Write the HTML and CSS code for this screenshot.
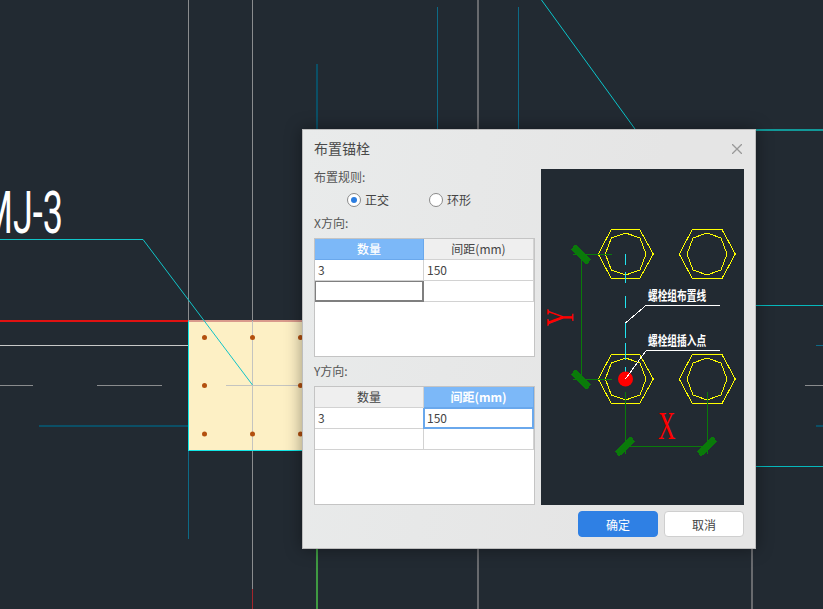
FILE: index.html
```html
<!DOCTYPE html>
<html lang="zh-CN">
<head>
<meta charset="utf-8">
<title>布置锚栓</title>
<link rel="stylesheet" href="styles.css">
</head>
<body>
<svg class="canvas" width="823" height="609" viewBox="0 0 823 609">
  <rect class="plate" x="188" y="321" width="116" height="129"/>
  <line class="l-red" x1="0" y1="321" x2="188" y2="321"/>
  <line class="l-plate-top" x1="188" y1="321" x2="304" y2="321"/>
  <line class="l-white" x1="0" y1="345" x2="188" y2="345"/>
  <line class="l-gray" x1="0" y1="385.5" x2="33" y2="385.5"/>
  <line class="l-gray" x1="97" y1="385.5" x2="162" y2="385.5"/>
  <line class="l-teal2" x1="39" y1="426" x2="188" y2="426"/>
  <line class="l-gray" x1="188.5" y1="0" x2="188.5" y2="321"/>
  <line class="l-teal1" x1="188.5" y1="450" x2="188.5" y2="539"/>
  <line class="l-gray" x1="252.5" y1="0" x2="252.5" y2="321"/>
  <line class="l-light" x1="252.5" y1="321" x2="252.5" y2="450"/>
  <line class="l-gray" x1="252.5" y1="451" x2="252.5" y2="589"/>
  <line class="l-dred" x1="252.5" y1="589" x2="252.5" y2="609"/>
  <line class="l-light" x1="226" y1="385.5" x2="304" y2="385.5"/>
  <line class="l-cyan" x1="188.5" y1="321" x2="188.5" y2="451"/>
  <line class="l-cyan" x1="188" y1="450.5" x2="304" y2="450.5"/>
  <polyline class="l-leader" points="0,239.5 143,239.5 252.5,385"/>
  <g class="dots">
    <circle cx="204.5" cy="337.5" r="2.5"/><circle cx="252.5" cy="337.5" r="2.5"/><circle cx="300.5" cy="337.5" r="2.5"/>
    <circle cx="204.5" cy="385.5" r="2.5"/><circle cx="300.5" cy="385.5" r="2.5"/>
    <circle cx="204.5" cy="434" r="2.5"/><circle cx="252.5" cy="434" r="2.5"/><circle cx="300.5" cy="434" r="2.5"/>
  </g>
  <line class="l-teal2" x1="317" y1="64" x2="317" y2="130"/>
  <line class="l-teal1" x1="437.5" y1="7" x2="437.5" y2="130"/>
  <line class="l-gray2" x1="478" y1="0" x2="478" y2="130"/>
  <line class="l-teal1" x1="518.5" y1="7" x2="518.5" y2="130"/>
  <line class="l-diag" x1="541.5" y1="0" x2="635" y2="129"/>
  <line class="l-green" x1="317" y1="548" x2="317" y2="609"/>
  <line class="l-gray2" x1="478" y1="548" x2="478" y2="609"/>
  <line class="l-gray2" x1="752" y1="548" x2="752" y2="609"/>
  <line class="l-teal3" x1="755" y1="130" x2="823" y2="130"/>
  <line class="l-cyan2" x1="755" y1="305.5" x2="823" y2="305.5"/>
  <line class="l-teal1" x1="816" y1="345.5" x2="823" y2="345.5"/>
  <line class="l-gray" x1="805" y1="385.5" x2="823" y2="385.5"/>
  <line class="l-teal2" x1="816" y1="426" x2="823" y2="426"/>
  <line class="l-cyan2" x1="755" y1="466.5" x2="823" y2="466.5"/>
  <text class="mark" transform="translate(63 233) scale(.6 1)" text-anchor="end">MJ-3</text>
</svg>

<section class="dialog">
  <header class="dialog-head">
    <h1 class="dialog-title">布置锚栓</h1>
    <svg class="close" width="10" height="10" viewBox="0 0 10 10"><path d="M0 0L10 10M10 0L0 10"/></svg>
  </header>
  <div class="dialog-body">
    <div class="form">
      <div class="label">布置规则:</div>
      <div class="radios">
        <label class="radio"><span class="radio-dot is-on"></span>正交</label>
        <label class="radio"><span class="radio-dot"></span>环形</label>
      </div>
      <div class="label label-x">X方向:</div>
      <div class="grid">
        <table>
          <colgroup><col class="col-a"><col class="col-b"></colgroup>
          <tr><th class="is-active">数量</th><th>间距(mm)</th></tr>
          <tr><td>3</td><td>150</td></tr>
          <tr><td class="focus-gray"></td><td></td></tr>
        </table>
      </div>
      <div class="label label-y">Y方向:</div>
      <div class="grid">
        <table>
          <colgroup><col class="col-a"><col class="col-b"></colgroup>
          <tr><th>数量</th><th class="is-active is-bold">间距(mm)</th></tr>
          <tr><td>3</td><td class="focus-blue">150</td></tr>
          <tr><td></td><td></td></tr>
        </table>
      </div>
    </div>
    <svg class="preview" width="203" height="336" viewBox="541 169 203 336">
      <g class="p-yellow">
        <polygon points="598.3,254 611.3,229.5 639.7,229.5 653.3,254 639.7,278.5 611.3,278.5"/>
        <polygon points="625.7,233 640,238 646,254 640,270 625.7,275 611.3,270 605.3,254 611.3,238"/>
        <polygon points="679.3,254 692.3,229.5 722,229.5 735.3,254 722,278.5 692.3,278.5"/>
        <polygon points="707,233 721,238 727,254 721,270 707,275 693,270 687,254 693,238"/>
        <polygon points="598.3,379 611.3,354.5 639.7,354.5 653.3,379 639.7,403.5 611.3,403.5"/>
        <polygon points="625.7,358 640,363 646,379 640,395 625.7,400 611.3,395 605.3,379 611.3,363"/>
        <polygon points="679.3,379 692.3,354.5 722,354.5 735.3,379 722,403.5 692.3,403.5"/>
        <polygon points="707,358 721,363 727,379 721,395 707,400 693,395 687,379 693,363"/>
      </g>
      <g class="p-green">
        <path d="M573 254H612M581.5 254V379M573 379H612M625.5 392V454M707.5 392V454M625.5 446.5H707.5"/>
      </g>
      <g class="p-tick">
        <path d="M573 247L589 262M573 372L589 387M617 454L633 439M699 454L715 439"/>
      </g>
      <g class="p-cyan">
        <path d="M625.5 254V265M625.5 272V283M625.5 296V308M625.5 322V338M625.5 343V360M625.5 367V378"/>
      </g>
      <circle class="p-dot" cx="625.5" cy="379" r="7.5"/>
      <g class="p-white">
        <path d="M720 305H646.5L625.5 323M720 350H646.5L625.5 379"/>
      </g>
      <text class="p-note" transform="translate(648 300) scale(.97 1.3)">螺栓组布置线</text>
      <text class="p-note" transform="translate(648 345) scale(.97 1.3)">螺栓组插入点</text>
      <text class="p-axis" transform="translate(658 439) scale(.6 1)">X</text>
      <text class="p-axis" transform="translate(573 326) rotate(-90) scale(.6 1)">Y</text>
    </svg>
  </div>
  <footer class="dialog-foot">
    <button class="btn btn-primary" type="button">确定</button>
    <button class="btn" type="button">取消</button>
  </footer>
</section>
</body>
</html>
```

FILE: styles.css
```css
* { box-sizing: border-box; }
html, body { margin: 0; height: 100%; }
body {
  position: relative;
  width: 823px;
  height: 609px;
  overflow: hidden;
  background: #222a32;
  font-family: "Noto Sans CJK SC", "Liberation Sans", sans-serif;
  font-size: 12px;
  color: #444;
}

/* drawing canvas */
.canvas { position: absolute; left: 0; top: 0; display: block; }
.canvas line { fill: none; shape-rendering: crispEdges; }
.plate { fill: #fdf0c5; }
.l-red { stroke: #e01212; stroke-width: 2; }
.l-plate-top { stroke: #d99a8c; stroke-width: 2; }
.l-white { stroke: #c8c8c8; stroke-width: 1; }
.l-gray { stroke: #8a8c8e; stroke-width: 1; }
.l-gray2 { stroke: #686a6e; stroke-width: 2; }
.l-light { stroke: #c4c4c0; stroke-width: 1; }
.l-dred { stroke: #a3262c; stroke-width: 1; }
.l-teal1 { stroke: #0d6a86; stroke-width: 1; }
.l-teal2 { stroke: #0b4f66; stroke-width: 2; }
.l-teal3 { stroke: #129898; stroke-width: 2; }
.l-green { stroke: #3f9a42; stroke-width: 2; }
.l-cyan { stroke: #12e6e6; stroke-width: 1; }
.l-cyan2 { stroke: #06b8bc; stroke-width: 1; }
.canvas .l-diag { stroke: #0bc4ca; stroke-width: 1; shape-rendering: auto; }
.l-leader { fill: none; stroke: #11c4c8; stroke-width: 1; }
.dots circle { fill: #b3500f; }
.mark {
  font-family: Roboto, "Liberation Sans", sans-serif;
  font-size: 60px;
  font-weight: 400;
  fill: #fff;
}

/* dialog window */
.dialog {
  position: absolute;
  left: 302px;
  top: 129px;
  width: 454px;
  height: 420px;
  display: flex;
  flex-direction: column;
  border: 1px solid #bdbdbd;
  background: linear-gradient(100deg, #e9ebeb, #e5e5e5 70%);
  box-shadow: 0 0 16px rgba(0, 0, 0, .4);
}
.dialog-head {
  height: 39px;
  flex: none;
  display: flex;
  align-items: center;
  justify-content: space-between;
  padding: 0 13px 0 11px;
}
.dialog-title { margin: 0 0 3px; font-size: 14px; font-weight: 400; color: #4a4a4a; }
.close { display: block; margin-bottom: 2px; fill: none; stroke: #999; stroke-width: 1.3; }
.dialog-body { flex: none; display: flex; gap: 6px; padding: 0 11px; }
.form { width: 221px; flex: none; }
.label { height: 18px; line-height: 16px; color: #555; }
.label-x { margin: 2px 0 5px; }
.label-y { margin: 6px 0 5px; }
.radios { height: 26px; display: flex; align-items: center; padding-left: 33px; gap: 40px; }
.radio { display: flex; align-items: center; gap: 4px; color: #444; line-height: 16px; }
.radio-dot {
  width: 14px;
  height: 14px;
  flex: none;
  display: flex;
  align-items: center;
  justify-content: center;
  border: 1px solid #8a8a8a;
  border-radius: 50%;
  background: #fff;
}
.radio-dot.is-on::after {
  content: "";
  width: 6px;
  height: 6px;
  border-radius: 50%;
  background: #2b7de0;
}

/* tables */
.grid { height: 119px; border: 1px solid #c4c4c4; background: #fff; }
.grid table { width: 219px; table-layout: fixed; border-collapse: separate; border-spacing: 0; }
.col-a { width: 109px; }
.col-b { width: 110px; }
.grid th, .grid td {
  height: 21px;
  padding: 0 0 0 3px;
  border-right: 1px solid #d2d2d2;
  border-bottom: 1px solid #d2d2d2;
  font-size: 12px;
  line-height: 16px;
  color: #444;
}
.grid th {
  padding: 0 0 1px;
  font-weight: 400;
  text-align: center;
  background: #efefef;
}
.grid th.is-active { background: #7cb8f8; color: #fff; border-color: #6aa8ec; font-weight: 500; }
.grid th.is-bold { font-weight: 700; }
.grid td.focus-gray {
  border-color: #7f7f7f;
  box-shadow: inset 1px 1px 0 #7f7f7f, inset -1px -1px 0 #7f7f7f;
}
.grid td.focus-blue {
  border-color: #6aa8ec;
  box-shadow: inset 1px 1px 0 #6aa8ec, inset -1px -1px 0 #6aa8ec, -1px 0 0 #6aa8ec;
}

/* preview */
.preview { display: block; flex: none; background: #222a32; }
.preview * { fill: none; shape-rendering: crispEdges; }
.p-yellow { stroke: #ffff00; stroke-width: 1; }
.p-green { stroke: #0a7a0a; stroke-width: 1; }
.p-tick { stroke: #0a7a0a; stroke-width: 7; }
.p-cyan { stroke: #22e4f0; stroke-width: 1.4; }
.p-white { stroke: #fff; stroke-width: 1; }
.preview .p-dot { fill: #ff0000; shape-rendering: auto; }
.preview .p-note {
  fill: #fff;
  font-family: "Noto Sans CJK SC", sans-serif;
  font-size: 10px;
  font-weight: 700;
  shape-rendering: auto;
}
.preview .p-axis {
  fill: #ff0000;
  font-family: "Liberation Serif", serif;
  font-size: 40px;
  shape-rendering: auto;
}

/* footer */
.dialog-foot { flex: none; display: flex; justify-content: flex-end; gap: 6px; padding: 6px 11px 0; }
.btn {
  width: 80px;
  height: 26px;
  padding: 0;
  border: 1px solid #cfcfcf;
  border-radius: 4px;
  background: #fff;
  color: #444;
  font: inherit;
}
.btn-primary { background: #2f80e4; border-color: #2f80e4; color: #fff; }
```
